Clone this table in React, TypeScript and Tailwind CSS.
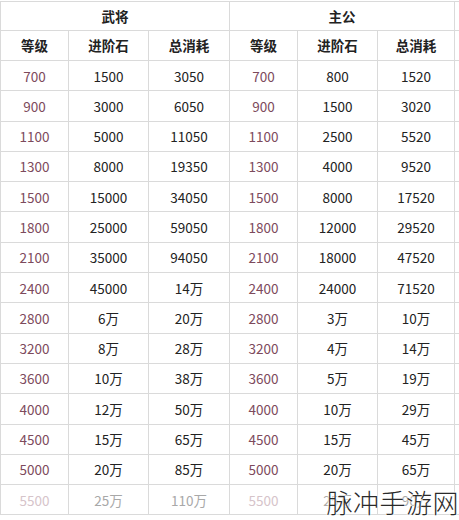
import React from 'react'

const WUJIANG = [
  ['700', '1500', '3050'],
  ['900', '3000', '6050'],
  ['1100', '5000', '11050'],
  ['1300', '8000', '19350'],
  ['1500', '15000', '34050'],
  ['1800', '25000', '59050'],
  ['2100', '35000', '94050'],
  ['2400', '45000', '14万'],
  ['2800', '6万', '20万'],
  ['3200', '8万', '28万'],
  ['3600', '10万', '38万'],
  ['4000', '12万', '50万'],
  ['4500', '15万', '65万'],
  ['5000', '20万', '85万'],
  ['5500', '25万', '110万'],
]

const ZHUGONG = [
  ['800', '1520'],
  ['1500', '3020'],
  ['2500', '5520'],
  ['4000', '9520'],
  ['8000', '17520'],
  ['12000', '29520'],
  ['18000', '47520'],
  ['24000', '71520'],
  ['3万', '10万'],
  ['4万', '14万'],
  ['5万', '19万'],
  ['10万', '29万'],
  ['15万', '45万'],
  ['20万', '65万'],
  ['25万', '90万'],
]

const COLS = 'grid grid-cols-[68px_80px_81px_68px_80px_77px_5px]'
const cell = 'flex items-center justify-center border-r border-b border-[#dadada]'

export default function App() {
  return (
    <div
      className="relative w-[459px] h-[520px] overflow-hidden bg-white pt-px text-[13.5px] text-[#222]"
      style={{ fontFamily: '"Noto Sans CJK SC", "Noto Sans", sans-serif' }}
    >
      <div className={`${COLS} h-[30px] border-t border-l border-[#dadada] font-bold`}>
        <div className={`${cell} col-span-3`}>武将</div>
        <div className={`${cell} col-span-3`}>主公</div>
        <div className="border-b border-[#dadada]" />
      </div>
      <div className={`${COLS} h-[30px] border-l border-[#dadada] font-bold`}>
        {['等级', '进阶石', '总消耗', '等级', '进阶石', '总消耗'].map((t, i) => (
          <div key={i} className={cell}>
            {t}
          </div>
        ))}
        <div className="border-b border-[#dadada]" />
      </div>
      {WUJIANG.map((r, i) => {
        const last = i === WUJIANG.length - 1
        const lvl = last ? 'text-[#d6c4ca]' : 'text-[#7d4a5c]'
        const txt = last ? 'text-[#a8a8a8]' : ''
        return (
          <div key={i} className={`${COLS} h-[30.3px] border-l border-[#dadada]`}>
            <div className={`${cell} ${lvl}`}>{r[0]}</div>
            <div className={`${cell} ${txt}`}>{r[1]}</div>
            <div className={`${cell} ${txt}`}>{r[2]}</div>
            <div className={`${cell} ${lvl}`}>{r[0]}</div>
            <div className={`${cell} ${txt}`}>{ZHUGONG[i][0]}</div>
            <div className={`${cell} ${txt}`}>{ZHUGONG[i][1]}</div>
            <div className="border-b border-[#dadada]" />
          </div>
        )
      })}
      {/* watermark over the last row */}
      <div
        className="absolute right-0 bottom-[5px] text-[26px] font-light leading-none tracking-[0.5px] text-[#2a2a2a]"
        style={{ textShadow: '0 0 2px #fff, 0 0 2px #fff, 0 0 3px #fff' }}
      >
        脉冲手游网
      </div>
    </div>
  )
}
